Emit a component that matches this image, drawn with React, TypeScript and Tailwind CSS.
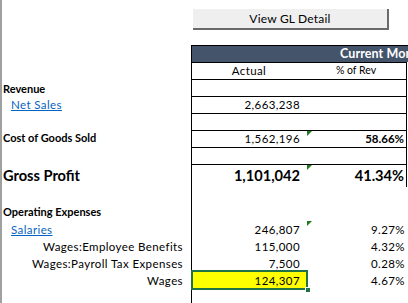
import React from "react";

const font = { fontFamily: "Lato, 'Liberation Sans', sans-serif" };

function Tri() {
  return (
    <span className="absolute left-[1px] top-0 w-0 h-0 border-t-[5px] border-t-[#1e7b1e] border-r-[5px] border-r-transparent" />
  );
}

type RowProps = {
  label?: React.ReactNode;
  actual?: React.ReactNode;
  pct?: React.ReactNode;
  h?: string;
  top?: boolean;
  right?: boolean;
  tri?: boolean;
  selected?: boolean;
};

function Row({ label, actual, pct, h = "h-[17px]", top = false, right = false, tri = false, selected = false }: RowProps) {
  const bt = top ? "border-t border-t-black" : "";
  return (
    <div className={`flex ${h}`}>
      <div className="w-[189px] flex items-center whitespace-nowrap">{label}</div>
      <div className={`relative w-[115px] border-l border-l-black ${bt} flex items-center justify-end pr-[6px]`}>
        {selected && (
          <>
            <span className="absolute left-[-1px] right-[-2px] top-[-2px] bottom-[-1px] border-2 border-[#217346] bg-[#ffff00]" />
            <span className="absolute right-[-5px] bottom-[-4px] w-[6px] h-[6px] bg-[#217346] border border-white" />
          </>
        )}
        <span className="relative">{actual}</span>
      </div>
      <div className={`relative w-[101px] ${bt} ${right ? "border-r border-r-black" : ""} flex items-center justify-end pr-[2px]`}>
        {tri && <Tri />}
        {pct}
      </div>
    </div>
  );
}

export default function App() {
  return (
    <div className="w-[408px] h-[303px] bg-white flex overflow-hidden text-[11.5px] tracking-[0.4px] text-black" style={font}>
      <div className="w-[2px] h-full bg-[#a0a0a0]" />
      <div className="w-[406px] flex flex-col">
        <div className="h-[45px] pt-[9px] pl-[191px]">
          <div className="w-[196px] h-[21px] bg-[#efefef] border-r-2 border-b-2 border-r-[#6a6a6a] border-b-[#6a6a6a] flex items-center justify-center text-[12px] tracking-[0.2px]">
            View GL Detail
          </div>
        </div>
        <div className="flex h-[17px]">
          <div className="w-[189px]" />
          <div className="w-[217px] bg-[#44546a] border-t border-l border-black text-white font-bold text-[12.5px] tracking-[0.1px] flex items-center pl-[148px] whitespace-nowrap overflow-hidden">
            Current Month
          </div>
        </div>
        <div className="flex h-[17px]">
          <div className="w-[189px]" />
          <div className="w-[115px] border-l border-t border-black flex items-center justify-center">Actual</div>
          <div className="w-[101px] border-t border-r border-black flex items-center justify-center text-[10.5px] tracking-normal">% of Rev</div>
        </div>
        <Row top right label={<span className="pl-[1px] pt-[3px] font-bold text-[11px] tracking-normal">Revenue</span>} />
        <Row top right label={<span className="pl-[9px] text-[#0563c1] underline">Net Sales</span>} actual="2,663,238" />
        <Row top right />
        <Row top right tri label={<span className="pl-[1px] font-bold text-[11px] tracking-normal">Cost of Goods Sold</span>} actual="1,562,196" pct={<span className="font-bold tracking-normal">58.66%</span>} />
        <Row top right />
        <Row
          top
          right
          tri
          h="h-[23px]"
          label={<span className="pl-[1px] font-bold text-[14.6px] tracking-normal">Gross Profit</span>}
          actual={<span className="font-bold text-[14.6px] tracking-normal">1,101,042</span>}
          pct={<span className="font-bold text-[14.6px] tracking-normal">41.34%</span>}
        />
        <Row />
        <Row label={<span className="pl-[1px] font-bold text-[11px] tracking-normal">Operating Expenses</span>} />
        <Row tri label={<span className="pl-[9px] text-[#0563c1] underline">Salaries</span>} actual="246,807" pct="9.27%" />
        <Row label={<span className="ml-auto pr-[8px]">Wages:Employee Benefits</span>} actual="115,000" pct="4.32%" />
        <Row label={<span className="ml-auto pr-[8px]">Wages:Payroll Tax Expenses</span>} actual="7,500" pct="0.28%" />
        <Row selected label={<span className="ml-auto pr-[8px]">Wages</span>} actual="124,307" pct="4.67%" />
        <div className="flex flex-1">
          <div className="w-[189px]" />
          <div className="border-l border-black" />
        </div>
      </div>
    </div>
  );
}
